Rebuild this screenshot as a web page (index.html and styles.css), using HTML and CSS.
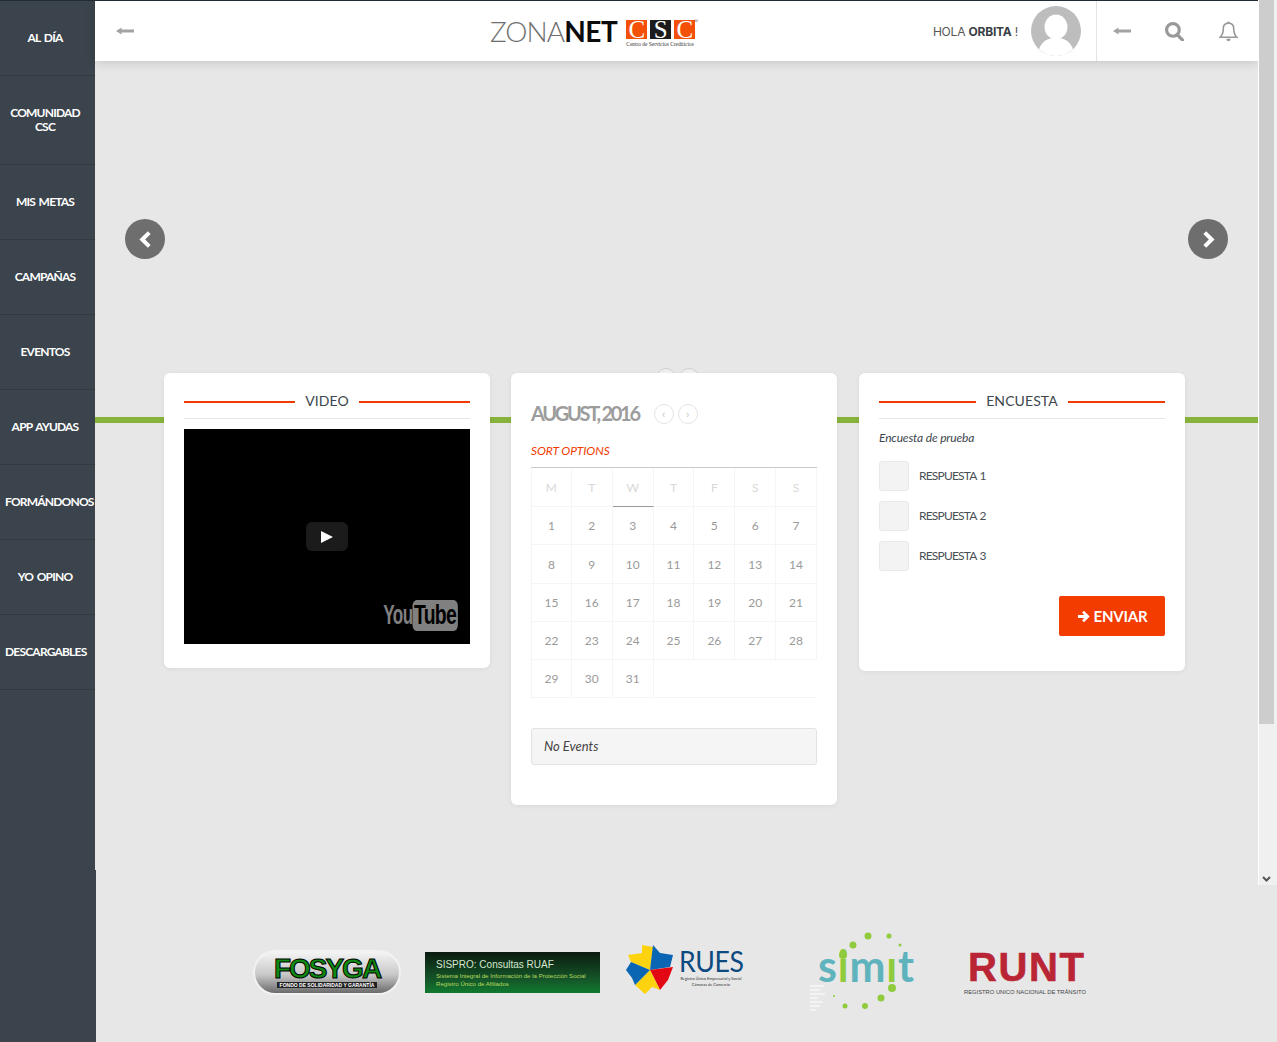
FILE: index.html
```html
<!DOCTYPE html>
<html lang="es">
<head>
<meta charset="utf-8">
<title>ZonaNet CSC</title>
<link rel="stylesheet" href="styles.css">
</head>
<body>
<div class="page">
  <aside class="side">
    <nav class="nav">
      <a class="nav-item">AL DÍA</a>
      <a class="nav-item tall">COMUNIDAD CSC</a>
      <a class="nav-item">MIS METAS</a>
      <a class="nav-item">CAMPAÑAS</a>
      <a class="nav-item">EVENTOS</a>
      <a class="nav-item">APP AYUDAS</a>
      <a class="nav-item wide">FORMÁNDONOS</a>
      <a class="nav-item">YO OPINO</a>
      <a class="nav-item wide">DESCARGABLES</a>
    </nav>
    <div class="side-foot"></div>
  </aside>
  <div class="main">
    <div class="top">
      <div class="content">
        <header class="header">
          <svg class="ico back" viewBox="0 0 18 8"><path d="M0 4 5.500 .5V2.500H18V5.500H5.500V7.500z"/></svg>
          <div class="logo">
            <span class="zona">ZONA</span><span class="net">NET</span>
            <div class="csc">
              <div class="csc-blocks">
                <span class="csc-b">C</span><span class="csc-b dark">S</span><span class="csc-b">C</span><span class="reg">®</span>
              </div>
              <div class="csc-sub">Centro de Servicios Crediticios</div>
            </div>
          </div>
          <div class="user">
            <span class="hola">HOLA <b>ORBITA</b> !</span>
            <svg class="avatar" viewBox="0 0 50 50"><circle cx="25" cy="25" r="25" fill="#bdbdbd"/><ellipse cx="25" cy="21" rx="11.500" ry="12.500" fill="#fff"/><path d="M8 43c3-8 9-11 17-11s14 3 17 11c-4 4-10 7-17 7s-13-3-17-7z" fill="#fff"/></svg>
          </div>
          <div class="tools">
            <svg class="ico back" viewBox="0 0 18 8"><path d="M0 4 5.500 .5V2.500H18V5.500H5.500V7.500z"/></svg>
            <svg class="ico search" viewBox="0 0 18 18"><circle cx="7.500" cy="7.500" r="6" fill="none" stroke="#999" stroke-width="3"/><path d="M11.500 12 16.500 17" stroke="#999" stroke-width="3.200" stroke-linecap="round"/></svg>
            <svg class="ico bell" viewBox="0 0 18 20"><path d="M9 2c-3.500 0-5 2.500-5 5.500 0 4-1 6-3 8h16c-2-2-3-4-3-8C14 4.500 12.500 2 9 2z" fill="none" stroke="#999" stroke-width="1.500"/><path d="M7 17h4c0 1.500-1 2.300-2 2.300S7 18.500 7 17z" fill="#999"/><circle cx="9" cy="1.500" r="1.100" fill="#999"/></svg>
          </div>
        </header>
        <section class="hero">
          <button class="round"><svg viewBox="0 0 12 16"><path d="M9.500 1.500 3 8l6.500 6.500" fill="none" stroke="#fff" stroke-width="3.800"/></svg></button>
          <button class="round"><svg viewBox="0 0 12 16"><path d="M2.500 1.500 9 8l-6.500 6.500" fill="none" stroke="#fff" stroke-width="3.800"/></svg></button>
        </section>
        <section class="cards">
          <article class="card video-card">
            <h2 class="title"><span>VIDEO</span></h2>
            <div class="video">
              <div class="play"><svg viewBox="0 0 12 12"><path d="M0 0l12 6-12 6z" fill="#fff"/></svg></div>
              <div class="yt"><span class="yt-you">You</span><span class="yt-tube">Tube</span></div>
            </div>
          </article>
          <article class="card cal-card">
            <div class="peek"><i></i><i></i></div>
            <div class="cal-head">
              <h2 class="month">AUGUST, 2016</h2>
              <span class="cal-nav">‹</span><span class="cal-nav">›</span>
            </div>
            <div class="sort">SORT OPTIONS</div>
            <div class="cal">
              <div class="dow">M</div><div class="dow">T</div><div class="dow now">W</div><div class="dow">T</div><div class="dow">F</div><div class="dow">S</div><div class="dow">S</div>
              <div class="day">1</div><div class="day">2</div><div class="day">3</div><div class="day">4</div><div class="day">5</div><div class="day">6</div><div class="day">7</div>
              <div class="day">8</div><div class="day">9</div><div class="day">10</div><div class="day">11</div><div class="day">12</div><div class="day">13</div><div class="day">14</div>
              <div class="day">15</div><div class="day">16</div><div class="day">17</div><div class="day">18</div><div class="day">19</div><div class="day">20</div><div class="day">21</div>
              <div class="day">22</div><div class="day">23</div><div class="day">24</div><div class="day">25</div><div class="day">26</div><div class="day">27</div><div class="day">28</div>
              <div class="day">29</div><div class="day">30</div><div class="day">31</div><div class="day blank"></div>
            </div>
            <div class="no-events">No Events</div>
          </article>
          <article class="card poll-card">
            <h2 class="title"><span>ENCUESTA</span></h2>
            <p class="question">Encuesta de prueba</p>
            <div class="answers">
              <label class="answer"><span class="check"></span><span class="answer-text">RESPUESTA 1</span></label>
              <label class="answer"><span class="check"></span><span class="answer-text">RESPUESTA 2</span></label>
              <label class="answer"><span class="check"></span><span class="answer-text">RESPUESTA 3</span></label>
            </div>
            <div class="actions">
              <button class="send"><svg viewBox="0 0 14 14"><path d="M1 7h10M6.500 2 11.500 7 6.500 12" fill="none" stroke="#fff" stroke-width="3"/></svg>ENVIAR</button>
            </div>
          </article>
        </section>
      </div>
      <div class="scrollbar">
        <div class="thumb"></div>
        <svg class="sb-arrow" viewBox="0 0 9 6"><path d="M1 1l3.500 3.500L8 1" fill="none" stroke="#555" stroke-width="2"/></svg>
      </div>
    </div>
    <footer class="footer">
      <div class="fosyga">
        <div class="fos-name">FOSYGA</div>
        <div class="fos-sub">FONDO DE SOLIDARIDAD Y GARANTÍA</div>
      </div>
      <div class="sispro">
        <div class="sis-name">SISPRO: Consultas RUAF</div>
        <div class="sis-sub">Sistema Integral de Información de la Protección Social<br>Registro Único de Afiliados</div>
      </div>
      <div class="rues">
        <svg class="rues-star" viewBox="0 0 48 50">
          <path d="M24 25 5 17 2 10l14-2V0l11 2z" fill="#fdd20e"/>
          <path d="M24 25 27 0l7 8 13 2-3 12z" fill="#0a66b3"/>
          <path d="M24 25 47 22l-5 13-8 10z" fill="#e30613"/>
          <path d="M24 25 34 45l-8-3-7 7-10-9z" fill="#fdd20e"/>
          <path d="M24 25 5 17 0 25l6 8 3 7z" fill="#0a66b3"/>
        </svg>
        <div class="rues-text">
          <div class="rues-name">RUES</div>
          <div class="rues-sub">Registro Único Empresarial y Social<br>Cámaras de Comercio</div>
        </div>
      </div>
      <div class="simit">
        <svg class="simit-dots" viewBox="0 0 108 80">
          <g fill="#8fcb3c">
            <circle cx="58" cy="4" r="3.500"/><circle cx="79" cy="4" r="2.500"/><circle cx="43" cy="13" r="3.500"/><circle cx="90" cy="13" r="1.500"/><circle cx="33" cy="23" r="4"/><circle cx="82" cy="56" r="4"/><circle cx="71" cy="66" r="3.500"/><circle cx="55" cy="74" r="3"/><circle cx="35" cy="74" r="2.500"/><circle cx="24" cy="64" r="1"/>
          </g>
          <path d="M0 54h14M0 58h10M0 62h15M0 66h8M0 70h13M0 74h10M0 78h6" stroke="#fff" stroke-width="1"/>
        </svg>
        <div class="simit-word"><span class="t">s</span><span class="g">i</span><span class="t">m</span><span class="g">ı</span><span class="t">t</span></div>
      </div>
      <div class="runt">
        <div class="runt-name">RUNT</div>
        <div class="runt-sub">REGISTRO UNICO NACIONAL DE TRÁNSITO</div>
      </div>
    </footer>
  </div>
</div>
</body>
</html>
```
FILE: styles.css
```css
* { box-sizing: border-box; }
html, body { margin: 0; height: 100%; overflow: hidden; }
body { background: #e7e7e7; font-family: "Lato", "Liberation Sans", sans-serif; color: #3d464d; }

.page { display: grid; grid-template-columns: 95px 1fr; width: 1277px; height: 1042px; }

/* sidebar */
.side { display: flex; flex-direction: column; height: 1042px; }
.nav { width: 95px; height: 870px; background: #3b444c; border-top: 1px solid #222c33; }
.side-foot { width: 96px; flex: 1; background: #3b444c; }
.nav-item { display: flex; align-items: center; justify-content: center; height: 75px; padding: 0 10px 0 5px; border-bottom: 1px solid #32393f; color: #fff; font-size: 12px; font-weight: 700; line-height: 14px; letter-spacing: -.8px; word-spacing: 1.500px; text-align: center; }
.nav-item.tall { height: 89px; }
.nav-item.wide { justify-content: flex-start; white-space: nowrap; }

/* main */
.main { display: flex; flex-direction: column; min-width: 0; }
.top { display: flex; height: 885px; }
.content { width: 1163px; display: flex; flex-direction: column; }

.header { position: relative; display: flex; align-items: center; height: 61px; background: #fff; border-top: 1px solid #222c33; box-shadow: 0 2px 10px rgba(0,0,0,.14); }
.ico { display: block; fill: #a3a3a3; }
.back { width: 18px; height: 8px; }
.header > .back { margin-left: 21px; }
.logo { display: flex; align-items: center; margin-left: 356px; height: 60px; font-size: 28px; letter-spacing: -.9px; line-height: 1; }
.zona { color: #6f6f6f; font-weight: 300; }
.net { color: #0b0b0b; font-weight: 700; letter-spacing: -.5px; }
.csc { margin-left: 9px; width: 72px; padding-top: 4px; font-family: "Liberation Serif", serif; letter-spacing: 0; }
.csc-blocks { position: relative; display: flex; gap: 3px; }
.csc-b { width: 21px; height: 19px; background: #f4500a; color: #fff; font-size: 25px; line-height: 20px; text-align: center; }
.csc-b.dark { background: #1c1c1c; }
.reg { position: absolute; right: 0; top: -2px; font-size: 6px; line-height: 6px; color: #555; }
.csc-sub { margin-top: 2px; font-size: 5.400px; line-height: 6px; color: #333; white-space: nowrap; }

.user { display: flex; align-items: center; margin-left: auto; }
.hola { font-family: "Inter", "Liberation Sans", sans-serif; font-size: 12px; letter-spacing: -.2px; color: #555; }
.hola b { color: #3a3f45; font-weight: 700; }
.avatar { width: 50px; height: 50px; margin-left: 13px; display: block; }
.tools { display: flex; align-items: center; height: 60px; margin-left: 15px; padding: 0 20px 0 16px; border-left: 1px solid #e3e3e3; }
.search { width: 19px; height: 19px; margin-left: 34px; }
.bell { width: 19px; height: 21px; margin-left: 35px; }

.hero { display: flex; justify-content: space-between; align-items: flex-start; height: 312px; padding: 158px 30px 0; }
.round { display: flex; align-items: center; justify-content: center; width: 40px; height: 40px; padding: 0; border: 0; border-radius: 50%; background: #6e6e6e; }
.round svg { width: 13px; height: 17px; }

.cards { display: flex; align-items: flex-start; gap: 21px; flex: 1; padding-left: 69px; background: linear-gradient(#87b23b, #87b23b) 0 44px / 100% 6px no-repeat; }
.card { position: relative; width: 326px; padding: 20px; background: #fff; border-radius: 6px; box-shadow: 0 1px 5px rgba(0,0,0,.06); }
.video-card { height: 295px; }
.cal-card { height: 432px; }
.poll-card { height: 298px; margin-left: 1px; }

.title { display: flex; align-items: flex-start; gap: 10px; height: 26px; margin: 0; border-bottom: 1px solid #e6e6e6; font-size: 14px; font-weight: 400; line-height: 15px; letter-spacing: .1px; color: #3d464d; }
.title::before, .title::after { content: ""; flex: 1; height: 2px; margin-top: 8px; background: #f03c00; }

.video { position: relative; height: 215px; margin-top: 10px; background: #000; }
.play { position: absolute; left: 122px; top: 93px; display: flex; align-items: center; justify-content: center; width: 42px; height: 29px; background: #1b1b1b; border-radius: 6px; }
.play svg { width: 12px; height: 12px; }
.yt { position: absolute; right: 13px; bottom: 13px; display: flex; align-items: center; font-family: "Liberation Sans", sans-serif; font-weight: 700; font-size: 27px; letter-spacing: -1px; line-height: 31px; color: #808080; transform: scaleX(.72); transform-origin: right; }
.yt-you { transform: scaleX(.88); transform-origin: right; }
.yt-tube { padding: 0 2px; background: #808080; color: #000; border-radius: 6px; }

.peek { position: absolute; top: -5px; left: 145px; display: flex; gap: 3px; height: 5px; overflow: hidden; }
.peek i { display: block; width: 20px; height: 20px; border: 1px solid #cfcfcf; border-radius: 50%; background: #eee; }
.cal-head { display: flex; align-items: center; gap: 4px; height: 41px; }
.month { margin: 0 11px 0 0; padding-bottom: 2px; font-size: 20px; font-weight: 700; letter-spacing: -2.300px; color: #9c9c9c; }
.cal-nav { display: flex; align-items: center; justify-content: center; width: 20px; height: 20px; border: 1px solid #e4e4e4; border-radius: 50%; font-size: 12px; line-height: 1; color: #c4c4c4; }
.sort { height: 24px; margin-top: 7px; font-size: 12px; font-style: italic; line-height: 20px; letter-spacing: -.1px; color: #f03c00; }
.cal { display: grid; grid-template-columns: repeat(7, 1fr); grid-template-rows: 39px 38px 39px 38px 38px 38px; margin-top: 2px; border-top: 1px solid #c8c8c8; }
.dow, .day { display: flex; align-items: center; justify-content: center; border-right: 1px solid #f5f5f5; border-bottom: 1px solid #f5f5f5; font-size: 12px; }
.dow:first-child, .day:nth-child(7n+1) { border-left: 1px solid #f5f5f5; }
.dow { color: #d8d8d8; }
.dow.now { border-bottom: 1px solid #999; }
.day { color: #9a9a9a; }
.day.blank { grid-column: span 4; border-right: 0; }
.no-events { height: 37px; margin-top: 30px; padding-left: 12px; background: #f5f5f5; border: 1px solid #e2e2e2; border-radius: 3px; font-size: 13px; font-style: italic; line-height: 35px; color: #444; }

.question { margin: 11px 0 0; height: 18px; font-size: 12px; font-style: italic; line-height: 15px; letter-spacing: -.15px; color: #3d464d; }
.answers { display: flex; flex-direction: column; gap: 10px; margin-top: 13px; }
.answer { display: flex; align-items: center; gap: 10px; height: 30px; font-size: 12px; letter-spacing: -.8px; word-spacing: 1px; color: #4a4f55; }
.answer-text { margin-bottom: 2px; }
.check { width: 30px; height: 30px; background: #f3f3f3; border: 1px solid #e9e9e9; border-radius: 3px; }
.actions { display: flex; justify-content: flex-end; margin-top: 25px; }
.send { display: flex; align-items: center; justify-content: center; gap: 4px; width: 106px; height: 40px; padding: 0; border: 0; border-radius: 2px; background: #f23c00; color: #fff; font-family: "Lato", sans-serif; font-size: 15px; font-weight: 700; letter-spacing: -.2px; }
.send svg { width: 13px; height: 13px; }

.scrollbar { position: relative; width: 19px; height: 885px; background: #f0f0f0; border-left: 1px solid #fff; }
.thumb { width: 15px; height: 724px; background: #cdcdcd; }
.sb-arrow { position: absolute; left: 3px; bottom: 3px; width: 9px; height: 6px; display: block; }

/* footer logos */
.footer { display: flex; align-items: flex-start; flex: 1; padding-left: 158px; }
.fosyga { width: 148px; height: 45px; margin-top: 65px; padding-top: 4px; text-align: center; border: 2px solid #f2f2f2; border-radius: 23px; background: linear-gradient(#f4f4f4, #c8c8c8 55%, #6b6b6b); }
.fos-name { font-family: "Liberation Sans", sans-serif; font-size: 28px; font-weight: 700; line-height: 26px; letter-spacing: -2px; color: #0f8a12; -webkit-text-stroke: 1px #000; }
.fos-sub { font-family: "Liberation Sans", sans-serif; font-size: 5px; font-weight: 700; line-height: 6px; color: #fff; background: #222; margin: 0 22px; white-space: nowrap; }
.sispro { width: 175px; height: 41px; margin: 67px 0 0 24px; padding: 6px 11px; background: linear-gradient(#0b1a0f, #15592a 70%, #0f7a2e); color: #d6e6d0; font-family: "Liberation Sans", sans-serif; white-space: nowrap; }
.sis-name { font-size: 10px; line-height: 13px; }
.sis-sub { font-size: 6.100px; line-height: 8px; margin-top: 1px; color: #b9d85e; }
.rues { display: flex; width: 118px; margin: 60px 0 0 26px; }
.rues-star { flex: none; width: 48px; height: 50px; display: block; }
.rues-text { width: 64px; margin: 3px 0 0 5px; text-align: center; white-space: nowrap; }
.rues-name { height: 28px; font-size: 29px; line-height: 26px; letter-spacing: -.4px; color: #0d4a80; text-align: left; transform: scaleX(.92); transform-origin: left; }
.rues-sub { font-size: 4px; line-height: 6px; color: #333; }
.simit { position: relative; width: 108px; height: 80px; margin: 47px 0 0 66px; }
.simit-dots { position: absolute; left: 0; top: 0; width: 108px; height: 80px; }
.simit-word { position: relative; margin: 12px 0 0 8px; font-size: 43px; font-weight: 700; line-height: 44px; letter-spacing: .8px; }
.simit-word .t { color: #5fb3bd; }
.simit-word .g { color: #8fcb3c; }
.runt { width: 124px; margin: 61px 0 0 46px; }
.runt-name { padding-left: 4px; font-family: "Liberation Sans", sans-serif; font-size: 40px; font-weight: 700; line-height: 42px; color: #b92534; letter-spacing: 1.600px; -webkit-text-stroke: .6px #b92534; }
.runt-sub { font-family: "Liberation Sans", sans-serif; font-size: 5.800px; line-height: 8px; color: #444; white-space: nowrap; }
```
